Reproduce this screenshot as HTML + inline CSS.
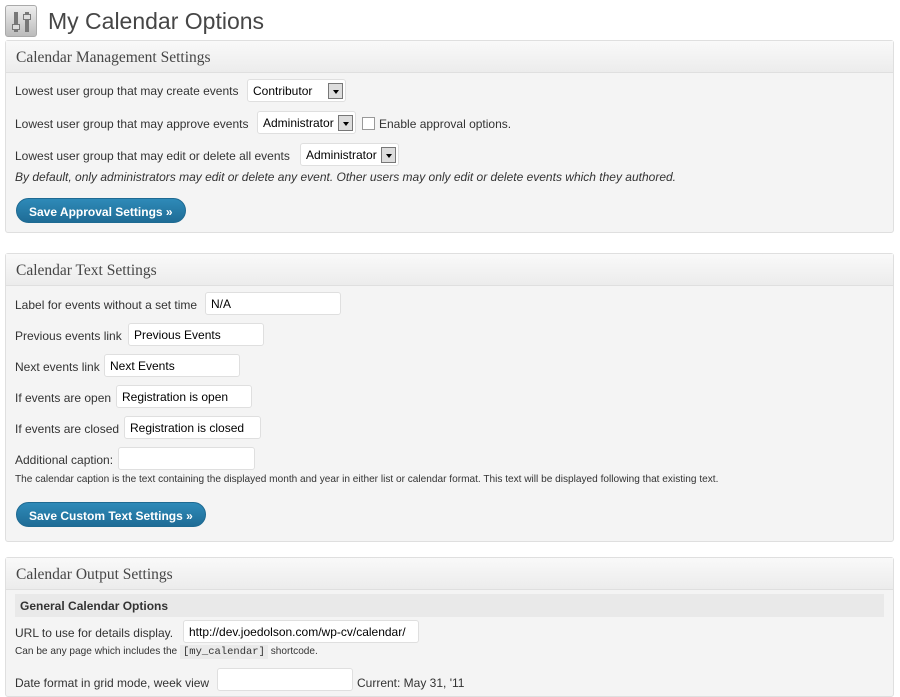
<!DOCTYPE html><html><head><meta charset="utf-8"><style>
*{box-sizing:border-box}
body{margin:0;width:900px;height:683px;overflow:hidden;background:#fff;font-family:"Liberation Sans",Arial,sans-serif;font-size:12px;color:#333;position:relative}
.a{position:absolute;white-space:nowrap}
.panel{position:absolute;left:5px;width:889px;border:1px solid #dfdfdf;border-radius:3px;background:#f4f4f4}
.hd{height:32px;background:linear-gradient(#f9f9f9,#ececec);border-bottom:1px solid #dfdfdf;font-family:"Liberation Serif",Georgia,serif;font-size:15.5px;color:#464646;padding:8px 10px}
.in{position:absolute;height:23px;background:#fff;border:1px solid #dfdfdf;border-radius:3px;padding:4px 5px;color:#000;font-size:12px;white-space:nowrap;overflow:hidden}
.dd{position:absolute;right:2px;top:3px;width:15px;height:16px;border:1px solid #777;background:#ddd}
.dd:after{content:"";position:absolute;left:4px;top:6px;border:3px solid transparent;border-top:4px solid #000}
.btn{position:absolute;height:25px;border-radius:13px;background:linear-gradient(#2e8ab8,#1f6c96);border:1px solid #1e6a92;color:#fff;font-weight:bold;font-size:12px;padding:6px 12px;white-space:nowrap}
.sm{font-size:10.1px}
</style></head><body>
<div class="a" style="left:5px;top:5px;width:32px;height:32px;border:1px solid #aaa;border-radius:3px;background:linear-gradient(#eee,#bbb)">
<div style="position:absolute;left:8px;top:6px;width:4px;height:20px;background:#777"></div><div style="position:absolute;left:6px;top:18px;width:8px;height:6px;background:#ddd;border:1px solid #777"></div>
<div style="position:absolute;left:19px;top:6px;width:4px;height:20px;background:#777"></div><div style="position:absolute;left:17px;top:8px;width:8px;height:6px;background:#ddd;border:1px solid #777"></div></div>
<div class="a" style="left:48px;top:8px;font-size:23px;color:#464646">My Calendar Options</div>

<div class="panel" style="top:40px;height:193px"><div class="hd">Calendar Management Settings</div></div>
<div class="a" style="left:15px;top:84px">Lowest user group that may create events</div>
<div class="in" style="left:247px;top:79px;width:99px">Contributor<div class="dd"></div></div>
<div class="a" style="left:15px;top:117px">Lowest user group that may approve events</div>
<div class="in" style="left:257px;top:111px;width:99px">Administrator<div class="dd"></div></div>
<div class="a" style="left:362px;top:117px;width:13px;height:13px;border:1px solid #999;background:#fff"></div>
<div class="a" style="left:379px;top:117px">Enable approval options.</div>
<div class="a" style="left:15px;top:149px">Lowest user group that may edit or delete all events</div>
<div class="in" style="left:300px;top:143px;width:99px">Administrator<div class="dd"></div></div>
<div class="a" style="left:15px;top:170px;font-style:italic">By default, only administrators may edit or delete any event. Other users may only edit or delete events which they authored.</div>
<div class="btn" style="left:16px;top:198px">Save Approval Settings »</div>

<div class="panel" style="top:253px;height:289px"><div class="hd">Calendar Text Settings</div></div>
<div class="a" style="left:15px;top:298px">Label for events without a set time</div>
<div class="in" style="left:205px;top:292px;width:136px">N/A</div>
<div class="a" style="left:15px;top:329px">Previous events link</div>
<div class="in" style="left:128px;top:323px;width:136px">Previous Events</div>
<div class="a" style="left:15px;top:360px">Next events link</div>
<div class="in" style="left:104px;top:354px;width:136px">Next Events</div>
<div class="a" style="left:15px;top:391px">If events are open</div>
<div class="in" style="left:116px;top:385px;width:136px">Registration is open</div>
<div class="a" style="left:15px;top:422px">If events are closed</div>
<div class="in" style="left:124px;top:416px;width:137px">Registration is closed</div>
<div class="a" style="left:15px;top:453px">Additional caption:</div>
<div class="in" style="left:118px;top:447px;width:137px"></div>
<div class="a sm" style="left:15px;top:474px">The calendar caption is the text containing the displayed month and year in either list or calendar format. This text will be displayed following that existing text.</div>
<div class="btn" style="left:16px;top:502px">Save Custom Text Settings »</div>

<div class="panel" style="top:557px;height:140px"><div class="hd">Calendar Output Settings</div></div>
<div class="a" style="left:15px;top:594px;width:869px;height:23px;background:#e9e9e9"></div>
<div class="a" style="left:20px;top:599px;font-weight:bold;font-size:12px">General Calendar Options</div>
<div class="a" style="left:15px;top:626px">URL to use for details display.</div>
<div class="in" style="left:183px;top:620px;width:236px">http://dev.joedolson.com/wp-cv/calendar/</div>
<div class="a sm" style="left:15px;top:646px">Can be any page which includes the <span style="font-family:'Liberation Mono',monospace;background:#eaeaea;padding:1px 3px;font-size:10.5px">[my_calendar]</span> shortcode.</div>
<div class="a" style="left:15px;top:676px">Date format in grid mode, week view</div>
<div class="in" style="left:217px;top:668px;width:136px"></div>
<div class="a" style="left:357px;top:676px">Current: May 31, '11</div>
</body></html>
